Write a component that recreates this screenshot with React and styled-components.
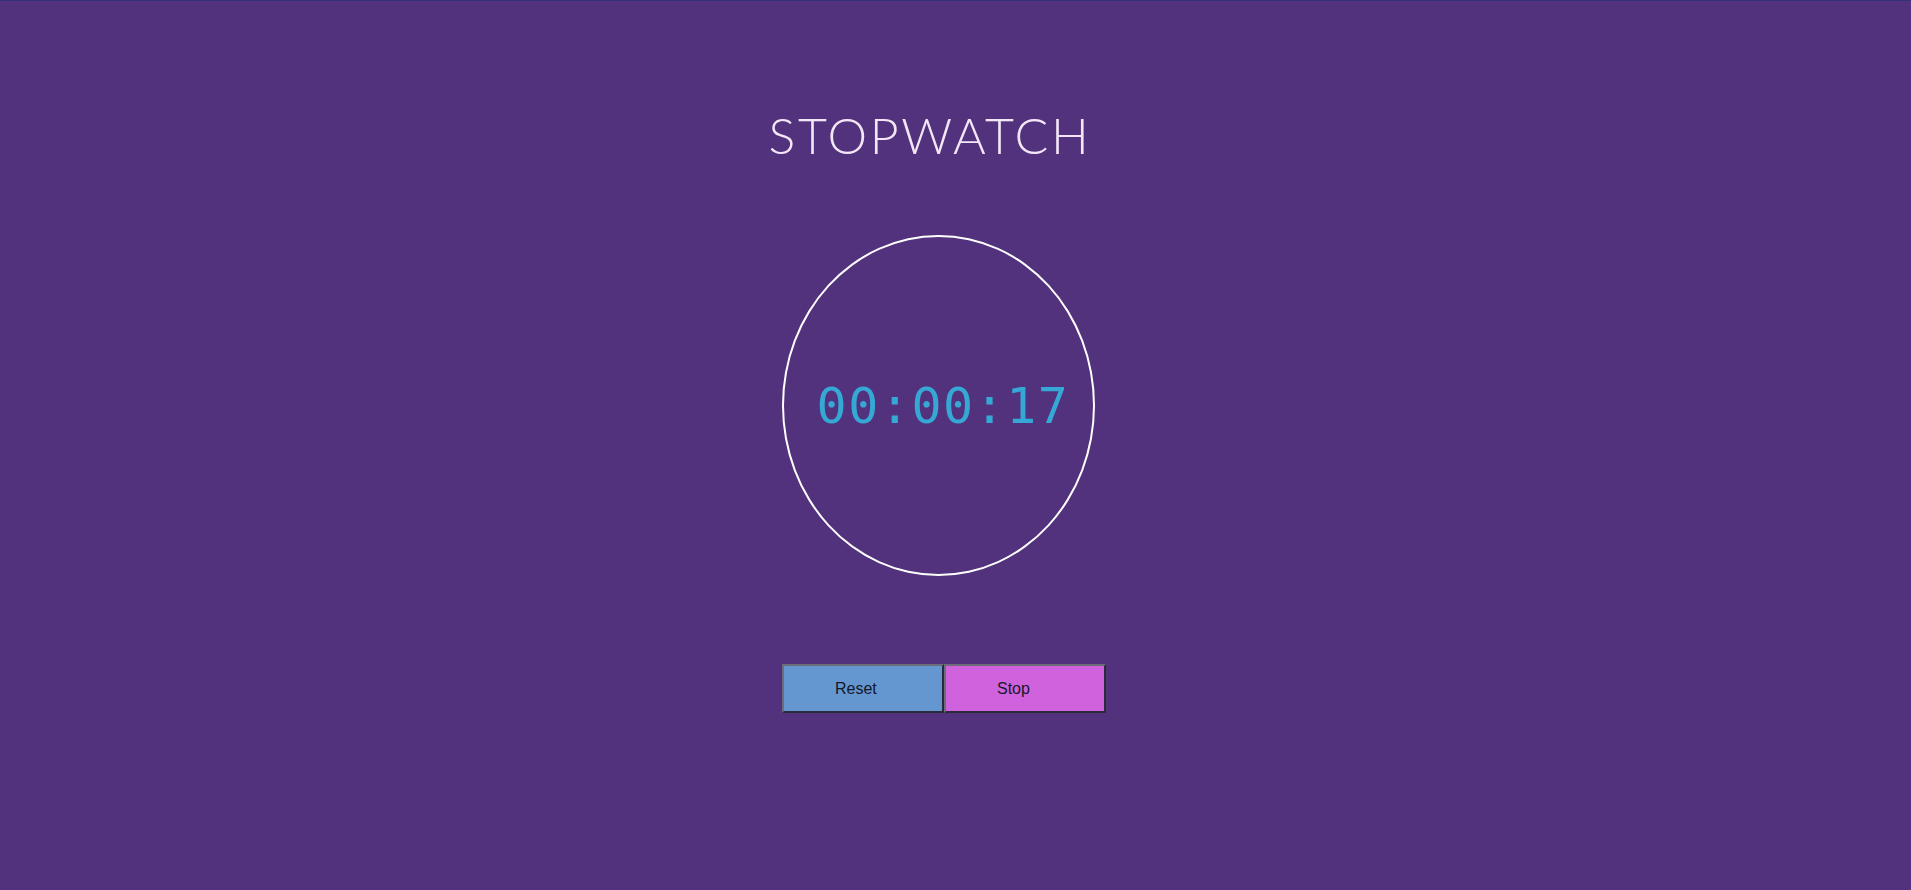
import React, { useState } from "react";
import styled, { createGlobalStyle } from "styled-components";

const GlobalStyle = createGlobalStyle`
  html, body {
    margin: 0;
    padding: 0;
    background: #52327c;
  }
  body {
    border-top: 1px solid #34307a;
    min-height: 889px;
    font-family: "Liberation Sans", Arial, sans-serif;
  }
`;

const Page = styled.main`
  width: 347px;
  margin: 0 auto;
  display: flex;
  flex-direction: column;
  align-items: flex-start;
`;

const TitleRow = styled.div`
  width: 296px;
  display: flex;
  justify-content: center;
  margin-top: 104px;
  height: 60px;
  align-items: center;
`;

const Title = styled.h1`
  margin: 0;
  white-space: nowrap;
  font-family: Lato, "Open Sans", sans-serif;
  font-weight: 300;
  font-size: 50px;
  letter-spacing: 2.7px;
  color: #f3e6f7;
`;

const Dial = styled.div`
  box-sizing: border-box;
  width: 313px;
  height: 341px;
  margin-top: 70px;
  border: 2px solid #ffffff;
  border-radius: 50%;
  display: flex;
  align-items: center;
  justify-content: center;
`;

const Time = styled.span`
  font-family: "DejaVu Sans Mono", "Liberation Mono", monospace;
  font-size: 50px;
  letter-spacing: 1.5px;
  color: #36a8d6;
  padding-left: 9px;
`;

const Controls = styled.div`
  display: flex;
  margin-top: 88px;
`;

const Button = styled.button`
  box-sizing: border-box;
  width: 162px;
  height: 49px;
  padding: 0 0 0 51px;
  text-align: left;
  border: 2px solid;
  border-color: #6d6d7a #2a2a3a #2a2a3a #6d6d7a;
  background: ${(p) => p.$bg};
  font-family: "Liberation Sans", Arial, sans-serif;
  font-size: 16px;
  color: #15172b;
  cursor: pointer;
`;

const pad = (n) => String(n).padStart(2, "0");

export default function App() {
  const [seconds] = useState(17);
  const h = Math.floor(seconds / 3600);
  const m = Math.floor((seconds % 3600) / 60);
  const s = seconds % 60;

  return (
    <>
      <GlobalStyle />
      <Page>
        <TitleRow>
          <Title>STOPWATCH</Title>
        </TitleRow>
        <Dial>
          <Time>
            {pad(h)}:{pad(m)}:{pad(s)}
          </Time>
        </Dial>
        <Controls>
          <Button $bg="#6496cf">Reset</Button>
          <Button $bg="#d062dd">Stop</Button>
        </Controls>
      </Page>
    </>
  );
}
